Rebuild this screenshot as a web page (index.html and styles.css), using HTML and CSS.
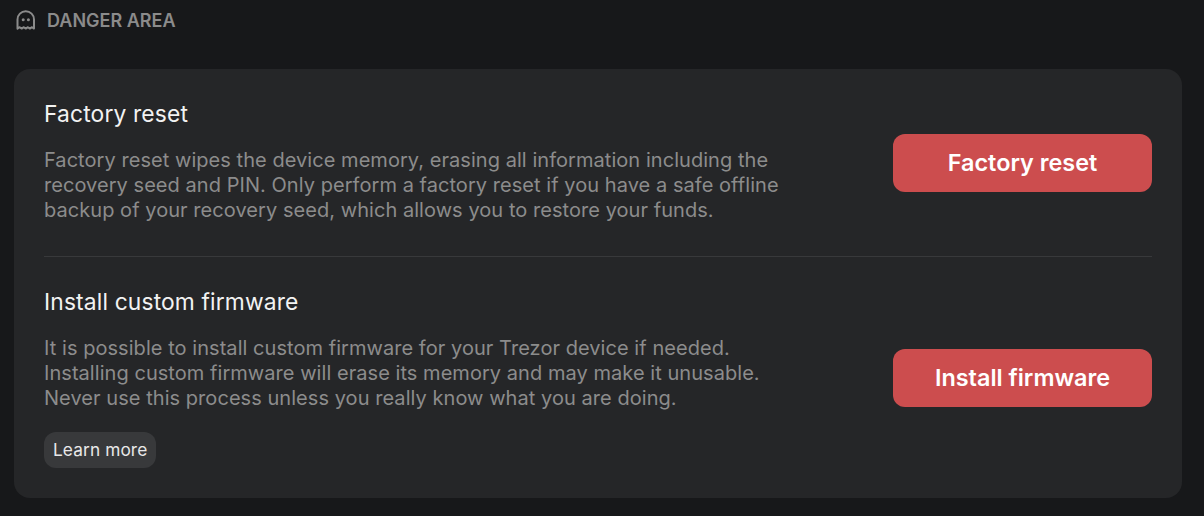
FILE: index.html
```html
<!DOCTYPE html>
<html lang="en">
<head>
    <meta charset="UTF-8">
    <title>Danger area</title>
    <link rel="stylesheet" href="styles.css">
</head>
<body>
    <div class="section-title">
        <svg class="ghost" viewBox="0 0 20 20" width="20" height="20" fill="none" stroke="currentColor" stroke-width="2" stroke-linejoin="round" stroke-linecap="round">
            <path d="M1.5 18.6V9.5a8.25 8.25 0 0 1 16.5 0v9.1l-2 -1.4 -2.1 1.4 -2 -1.4 -2.1 1.4 -2 -1.4 -2.1 1.4 -2 -1.4 z"/>
            <circle cx="7.2" cy="9.7" r="1.5" fill="currentColor" stroke="none"/>
            <circle cx="12.4" cy="9.7" r="1.5" fill="currentColor" stroke="none"/>
        </svg>
        <span>DANGER AREA</span>
    </div>

    <div class="card">
        <div class="row row-first">
            <div class="text">
                <h2>Factory reset</h2>
                <p>Factory reset wipes the device memory, erasing all information including the recovery seed and PIN. Only perform a factory reset if you have a safe offline backup of your recovery seed, which allows you to restore your funds.</p>
            </div>
            <button class="danger-btn">Factory reset</button>
        </div>
        <div class="row row-last">
            <div class="text">
                <h2>Install custom firmware</h2>
                <p>It is possible to install custom firmware for your Trezor device if needed. Installing custom firmware will erase its memory and may make it unusable. Never use this process unless you really know what you are doing.</p>
                <a class="learn-more">Learn more</a>
            </div>
            <button class="danger-btn">Install firmware</button>
        </div>
    </div>
</body>
</html>
```

FILE: styles.css
```css
body {
    margin: 0;
    height: 516px;
    overflow: hidden;
    background: #17181a;
    font-family: "Inter", "Liberation Sans", sans-serif;
    color: #f2f2f2;
}
.section-title {
    display: flex;
    align-items: center;
    gap: 11px;
    height: 20px;
    padding: 10px 0 0 16px;
    color: #8b8b8b;
    font-size: 18px;
    font-weight: 600;
}
.ghost {
    flex: none;
}
.card {
    margin: 39px 22px 0 14px;
    height: 429px;
    box-sizing: border-box;
    padding: 0 30px;
    background: #252628;
    border-radius: 16px;
}
.row {
    display: flex;
    justify-content: space-between;
    align-items: flex-start;
    box-sizing: border-box;
    padding-top: 30px;
}
.row-first {
    height: 188px;
    border-bottom: 1px solid #38393b;
}
.row-last {
    height: 241px;
}
.text {
    width: 745px;
}
h2 {
    margin: 0 0 19px;
    font-size: 22.8px;
    line-height: 30px;
    font-weight: 400;
    letter-spacing: 0.15px;
}
p {
    margin: 0;
    font-size: 20px;
    line-height: 25px;
    color: #8c8c8c;
    letter-spacing: 0.05px;
}
.learn-more {
    display: inline-block;
    margin-top: 21px;
    padding: 0 9px;
    height: 36px;
    line-height: 35px;
    background: #38393b;
    border-radius: 12px;
    font-size: 17.3px;
    font-weight: 400;
    letter-spacing: 0.1px;
    color: #e8e8e8;
}
.danger-btn {
    align-self: center;
    margin-top: -30px;
    padding-bottom: 2px;
    width: 259px;
    height: 58px;
    border: none;
    border-radius: 12px;
    background: #cc4d4e;
    color: #fff;
    font-family: inherit;
    font-size: 23.4px;
    font-weight: 600;
}
```
